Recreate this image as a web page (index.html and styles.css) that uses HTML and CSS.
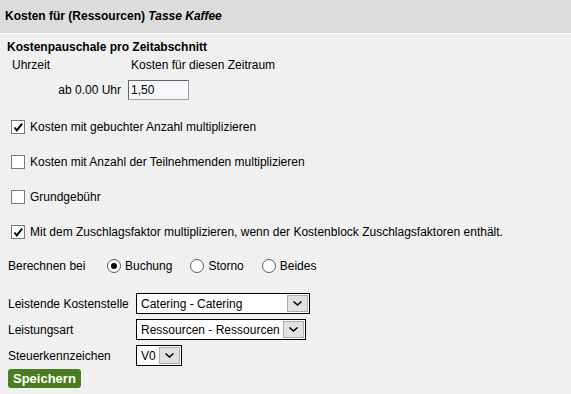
FILE: index.html
```html
<!DOCTYPE html>
<html>
<head lang="de">
    <meta charset="UTF-8">
    <title>Kosten</title>
    <link rel="stylesheet" href="styles.css">
</head>
<body>
    <div class="head">Kosten für (Ressourcen) <i>Tasse Kaffee</i></div>

    <div class="form">
        <div class="title">Kostenpauschale pro Zeitabschnitt</div>
        <div class="cols">
            <span class="col-time">Uhrzeit</span>
            <span>Kosten für diesen Zeitraum</span>
        </div>
        <div class="price-row">
            <span class="col-from">ab 0.00 Uhr</span>
            <span class="input">1,50</span>
        </div>

        <div class="check first">
            <span class="box"><svg width="13" height="13" viewBox="0 0 13 13"><path d="M2.5 6.5 L5 9.5 L10.5 2.5" fill="none" stroke="#000" stroke-width="2"/></svg></span>
            Kosten mit gebuchter Anzahl multiplizieren
        </div>
        <div class="check">
            <span class="box"></span>
            Kosten mit Anzahl der Teilnehmenden multiplizieren
        </div>
        <div class="check">
            <span class="box"></span>
            Grundgebühr
        </div>
        <div class="check">
            <span class="box"><svg width="13" height="13" viewBox="0 0 13 13"><path d="M2.5 6.5 L5 9.5 L10.5 2.5" fill="none" stroke="#000" stroke-width="2"/></svg></span>
            Mit dem Zuschlagsfaktor multiplizieren, wenn der Kostenblock Zuschlagsfaktoren enthält.
        </div>

        <div class="radios">
            <span class="radio-label">Berechnen bei</span>
            <span class="radio"><span class="dot on"></span>Buchung</span>
            <span class="radio"><span class="dot"></span>Storno</span>
            <span class="radio"><span class="dot"></span>Beides</span>
        </div>

        <div class="field first-field">
            <span class="label">Leistende Kostenstelle</span>
            <span class="select w1"><span class="value">Catering - Catering</span><span class="arrow"><svg width="11" height="7" viewBox="0 0 11 7"><path d="M1.5 1.5 L5.5 5 L9.5 1.5" fill="none" stroke="#000" stroke-width="1.6"/></svg></span></span>
        </div>
        <div class="field">
            <span class="label">Leistungsart</span>
            <span class="select"><span class="value">Ressourcen - Ressourcen</span><span class="arrow"><svg width="11" height="7" viewBox="0 0 11 7"><path d="M1.5 1.5 L5.5 5 L9.5 1.5" fill="none" stroke="#000" stroke-width="1.6"/></svg></span></span>
        </div>
        <div class="field">
            <span class="label">Steuerkennzeichen</span>
            <span class="select"><span class="value">V0</span><span class="arrow"><svg width="11" height="7" viewBox="0 0 11 7"><path d="M1.5 1.5 L5.5 5 L9.5 1.5" fill="none" stroke="#000" stroke-width="1.6"/></svg></span></span>
        </div>

        <button class="save">Speichern</button>
    </div>
</body>
</html>
```

FILE: styles.css
```css
body{
    margin: 0;
    background-color: #f0f0f0;
    font-family: "Liberation Sans", Arial, sans-serif;
    font-size: 12px;
    color: #000;
}

.head{
    height: 33px;
    line-height: 33px;
    padding-left: 5px;
    background-color: #dcdcdc;
    border-bottom: 1px solid #fff;
    font-weight: bold;
}

.form{
    padding: 6px 0 0 7px;
}

.title{
    font-weight: bold;
    line-height: 14px;
}

.cols{
    display: flex;
    margin-top: 4px;
    line-height: 14px;
}

.col-time{
    width: 119px;
    padding-left: 5px;
}

.price-row{
    display: flex;
    align-items: center;
    margin-top: 8px;
}

.col-from{
    width: 114px;
    text-align: right;
}

.input{
    width: 57px;
    height: 18px;
    line-height: 18px;
    margin-left: 7px;
    padding-left: 2px;
    background-color: #f7f8fc;
    border: 1px solid #a0a0a0;
    border-top-color: #646464;
    border-left-color: #646464;
}

.check{
    display: flex;
    align-items: center;
    margin-top: 21px;
    margin-left: 4px;
    height: 14px;
}

.check.first{
    margin-top: 20px;
}

.box{
    display: flex;
    width: 12px;
    height: 12px;
    border: 1px solid #7a7a7a;
    background-color: #fff;
    margin-right: 5px;
}

.box svg{
    margin: -0.5px 0 0 -0.5px;
}

.radios{
    display: flex;
    align-items: center;
    margin-top: 20px;
    margin-left: 1px;
    height: 14px;
}

.radio-label{
    width: 99px;
}

.radio{
    display: flex;
    align-items: center;
    margin-right: 18px;
}

.dot{
    width: 12px;
    height: 12px;
    border: 1px solid #5a5a5a;
    border-radius: 50%;
    background-color: #fff;
    margin-right: 4px;
    display: flex;
    align-items: center;
    justify-content: center;
}

.dot.on::after{
    content: "";
    width: 6px;
    height: 6px;
    border-radius: 50%;
    background-color: #000;
}

.field{
    display: flex;
    align-items: center;
    margin-top: 5px;
    margin-left: 1px;
}

.first-field{
    margin-top: 20px;
}

.label{
    width: 128px;
}

.select{
    display: flex;
    align-items: center;
    height: 19px;
    border: 1px solid #000;
    background-color: #fff;
    padding-left: 4px;
}

.w1 .value{
    width: 143px;
}

.value{
    padding-right: 3px;
    white-space: nowrap;
}

.arrow{
    display: flex;
    align-items: center;
    justify-content: center;
    width: 19px;
    height: 15px;
    margin-right: 1px;
    background-color: #e1e1e1;
    border: 1px solid #adadad;
}

.save{
    display: block;
    margin: 3px 0 0 1px;
    padding: 0 5px;
    height: 19px;
    border: none;
    border-radius: 3px;
    background-color: #4a7d22;
    color: #fff;
    font-family: "Liberation Sans", Arial, sans-serif;
    font-weight: bold;
    font-size: 13px;
}
```
